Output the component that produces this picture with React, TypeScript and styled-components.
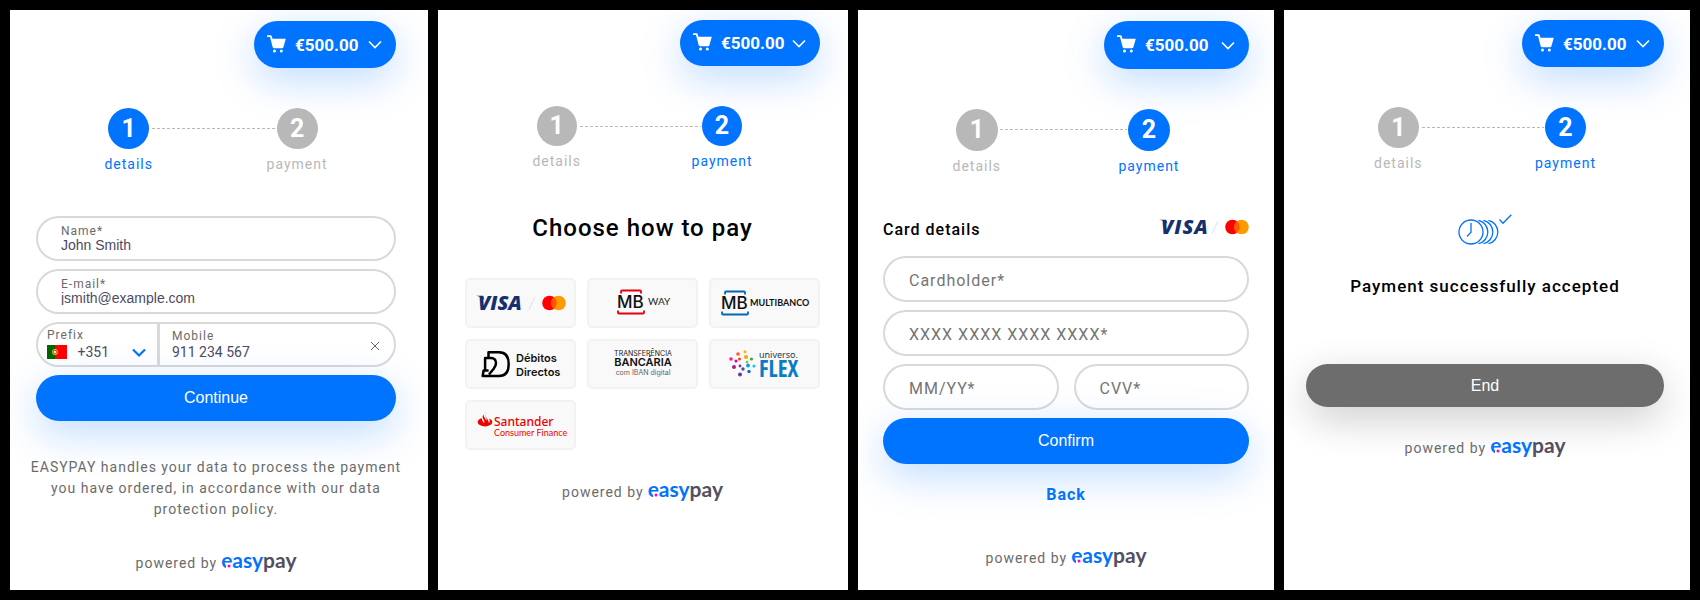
import React from 'react';
import styled, { createGlobalStyle } from 'styled-components';

const blue = '#0073ff';
const muted = '#b8b8b8';
const body = 'Roboto, "Open Sans", sans-serif';
const arial = '"Liberation Sans", Arial, sans-serif';

const GlobalStyle = createGlobalStyle`
  *, *::before, *::after { box-sizing: border-box; }
  body { margin: 0; background: #000; font-family: ${body}; font-size: 14px; letter-spacing: 1px; color: #6b6b6b; }
  button, input, select { font: inherit; letter-spacing: inherit; margin: 0; padding: 0; border: 0; background: none; color: inherit; }
  button { cursor: pointer; }
  h1, h2, p { margin: 0; }
  svg { overflow: visible; }
`;

type Size = 's' | 'm' | 'l';
const pillWidth = { s: 140, m: 142, l: 145 };
const pillHeight = { s: 46, m: 47, l: 48 };
const circleSize = { s: 40, m: 41, l: 42 };

const Board = styled.div`
  display: grid;
  grid-template-columns: 418fr 410fr 416fr 406fr;
  gap: 10px;
  padding: 10px;
  min-height: 100vh;
`;

const Panel = styled.main<{ $pad: string }>`
  display: flex;
  flex-direction: column;
  min-width: 0;
  padding: ${(p) => p.$pad};
  background: #fff;
  overflow: hidden;
`;

const CartPill = styled.button<{ $size: Size }>`
  display: flex;
  align-items: center;
  align-self: flex-end;
  flex: none;
  width: ${(p) => pillWidth[p.$size]}px;
  height: ${(p) => pillHeight[p.$size]}px;
  padding: 0 14px 0 13px;
  border-radius: 24px;
  background: ${blue};
  box-shadow: 0 12px 40px rgba(0, 115, 255, 0.25);
  color: #fff;
  font-size: 17px;
  font-weight: 700;
  letter-spacing: 0;
  svg:last-child { margin-left: auto; }
`;

const Amount = styled.span`
  margin-left: 9px;
`;

const StepList = styled.ol`
  display: flex;
  align-self: center;
  width: 62%;
  margin: 40px 0 0;
  padding: 0;
  list-style: none;
`;

const Step = styled.li<{ $active: boolean }>`
  display: flex;
  flex-direction: column;
  align-items: center;
  gap: 5px;
  line-height: 20px;
  color: ${(p) => (p.$active ? blue : muted)};
`;

const Circle = styled.span<{ $active: boolean; $size: Size }>`
  display: grid;
  place-items: center;
  width: ${(p) => circleSize[p.$size]}px;
  height: ${(p) => circleSize[p.$size]}px;
  border-radius: 50%;
  background: ${(p) => (p.$active ? blue : muted)};
  color: #fff;
  font-size: 25px;
  font-weight: 700;
  letter-spacing: 0;
`;

const Dashes = styled.li`
  flex: 1;
  height: 1px;
  margin: 20px -9px 0 -3px;
  background: repeating-linear-gradient(90deg, transparent 0 2px, #b8b8b8 2px 5px);
`;

const Form = styled.form`
  display: flex;
  flex-direction: column;
  gap: 8px;
`;

const DetailsForm = styled(Form)`
  margin-top: 42px;
`;

const CardForm = styled(Form)`
  margin-top: 14px;
`;

const Field = styled.div`
  display: flex;
  flex-direction: column;
  justify-content: center;
  height: 45px;
  padding: 0 23px;
  border: 2px solid #d9d9d9;
  border-radius: 23px;
`;

const FieldLabel = styled.label`
  font-size: 12px;
  line-height: 12px;
`;

const FieldInput = styled.input`
  width: 100%;
  height: 15px;
  outline: 0;
  color: #4d4b62;
  font-family: ${arial};
  letter-spacing: 0;
`;

const PhoneField = styled.div`
  display: flex;
  height: 45px;
  border: 2px solid #d9d9d9;
  border-radius: 23px;
`;

const PrefixPart = styled.div`
  display: flex;
  flex-direction: column;
  gap: 3px;
  width: 122px;
  padding: 5px 11px 0 9px;
  border-right: 3px solid #d9d9d9;
`;

const PrefixRow = styled.div`
  display: flex;
  align-items: center;
  justify-content: space-between;
`;

const PrefixSelect = styled.select`
  appearance: none;
  width: 44px;
  height: 16px;
  outline: 0;
  color: #4d4b62;
  letter-spacing: 0;
`;

const MobilePart = styled.div`
  display: flex;
  flex: 1;
  align-items: center;
  justify-content: space-between;
  min-width: 0;
  padding: 0 14px 0 12px;
`;

const MobileText = styled.div`
  display: flex;
  flex: 1;
  flex-direction: column;
  gap: 3px;
  min-width: 0;
`;

const PhoneInput = styled(FieldInput)`
  font-family: ${body};
`;

const ClearButton = styled.button`
  display: flex;
  padding: 3px 0 0;
`;

const ActionButton = styled.button<{ $neutral?: boolean }>`
  height: ${(p) => (p.$neutral ? 43 : 46)}px;
  border-radius: 24px;
  background: ${(p) => (p.$neutral ? '#6d6d6d' : blue)};
  box-shadow: 0 12px 40px ${(p) => (p.$neutral ? 'rgba(0, 0, 0, 0.2)' : 'rgba(0, 115, 255, 0.25)')};
  color: #fff;
  font-family: ${arial};
  font-size: 16px;
  letter-spacing: 0;
`;

const EndButton = styled(ActionButton)`
  margin-top: 66px;
`;

const Notice = styled.p`
  margin: 36px -12px 0;
  line-height: 21px;
  text-align: center;
`;

const Powered = styled.footer<{ $space: number }>`
  display: flex;
  align-items: baseline;
  justify-content: center;
  gap: 4px;
  margin-top: ${(p) => p.$space}px;
  line-height: 24px;
`;

const Brand = styled.a`
  position: relative;
  color: #52505f;
  font-family: Lato, sans-serif;
  font-size: 21px;
  font-weight: 700;
  letter-spacing: 0;
  text-decoration: none;
  b { color: ${blue}; font-weight: 700; }
  svg { position: absolute; left: 5px; top: 15px; }
`;

const Title = styled.h1`
  margin-top: 41px;
  color: #000;
  font-size: 24px;
  font-weight: 500;
  line-height: 32px;
  text-align: center;
`;

const Methods = styled.div`
  display: grid;
  grid-template-columns: repeat(3, 1fr);
  gap: 11px;
  margin-top: 34px;
`;

const Method = styled.button`
  display: grid;
  place-items: center;
  height: 50px;
  border: 2px solid #f2f2f2;
  border-radius: 5px;
  background: #f9f9f9;
  letter-spacing: 0;
`;

const CardHead = styled.div`
  display: flex;
  align-items: flex-start;
  justify-content: space-between;
  margin-top: 42px;
`;

const SubTitle = styled.h2<{ $large?: boolean }>`
  color: #000;
  font-size: ${(p) => (p.$large ? 17 : 16)}px;
  font-weight: 500;
  line-height: 24px;
`;

const CardInput = styled.input`
  width: 100%;
  min-width: 0;
  height: 46px;
  padding: 2px 24px 0;
  border: 2px solid #d9d9d9;
  border-radius: 23px;
  font-size: 16px;
  &::placeholder { color: #757575; opacity: 1; }
`;

const Pair = styled.div`
  display: grid;
  grid-template-columns: 1fr 1fr;
  gap: 15px;
`;

const BackLink = styled.a`
  align-self: center;
  margin-top: 19px;
  color: ${blue};
  font-size: 16px;
  font-weight: 700;
  line-height: 24px;
  text-decoration: none;
`;

const Success = styled.section`
  display: flex;
  flex-direction: column;
  align-items: center;
  gap: 28px;
  margin-top: 41px;
`;

const Chevron = ({ color, thick }: { color: string; thick: number }) => (
  <svg width="14" height="9" viewBox="0 0 14 9" fill="none" stroke={color} strokeWidth={thick} aria-hidden="true">
    <path d="M1 1.5 7 7.5 13 1.5" />
  </svg>
);

const CartIcon = () => (
  <svg width="19" height="20" viewBox="0 0 19 20" fill="#fff" aria-hidden="true">
    <path d="M0 .2h3.500c.6 0 1 .3 1.200.9L5.500 3.700h13.300L16.400 12.300c-.2.7-.6 1-1.300 1H7c-.7 0-1.100-.3-1.300-1L3 1.900H0z" />
    <circle cx="7.500" cy="16.100" r="1.500" />
    <circle cx="14.300" cy="16.100" r="1.500" />
  </svg>
);

const Header = ({ size, current }: { size: Size; current: 1 | 2 }) => (
  <>
    <CartPill type="button" $size={size}>
      <CartIcon />
      <Amount>€500.00</Amount>
      <Chevron color="#fff" thick={1.6} />
    </CartPill>
    <StepList>
      <Step $active={current === 1}>
        <Circle $active={current === 1} $size={size}>1</Circle>
        details
      </Step>
      <Dashes aria-hidden="true" />
      <Step $active={current === 2}>
        <Circle $active={current === 2} $size={size}>2</Circle>
        payment
      </Step>
    </StepList>
  </>
);

const PoweredBy = ({ space }: { space: number }) => (
  <Powered $space={space}>
    powered by
    <Brand href="#easypay">
      <b>easy</b>pay
      <svg width="6" height="5" viewBox="0 0 6 5" aria-hidden="true">
        <path d="M0 1h6v4H0z" fill="#fff" />
        <circle cx="3" cy="3" r="1.500" fill="#ff00c8" />
      </svg>
    </Brand>
  </Powered>
);

const Flag = () => (
  <svg width="20" height="14" viewBox="0 0 20 14" role="img" aria-label="Portugal">
    <path d="M0 0h8v14H0z" fill="#006600" />
    <path d="M8 0h12v14H8z" fill="#ff0000" />
    <circle cx="8" cy="7" r="2.900" fill="#e8c51c" />
    <path d="M6.300 5.200h3.400v2.300a1.700 1.700 0 0 1-3.400 0z" fill="#e02020" />
    <path d="M7.100 6h1.800v1.500a.9.9 0 0 1-1.800 0z" fill="#fff" />
  </svg>
);

const Cards = () => (
  <svg width="90" height="18" viewBox="0 0 90 18" role="img" aria-label="Visa, Mastercard">
    <text x="2" y="16" fontFamily="Open Sans" fontWeight="800" fontStyle="italic" fontSize="20" fill="#16306f">VISA</text>
    <path d="M0 1.700h7l1.500 4C6 3.500 3 2.200 0 1.700z" fill="#16306f" />
    <path d="m53 15.500 6-12.500" stroke="#e0e0e0" />
    <circle cx="73.500" cy="9" r="7.300" fill="#ff0000" />
    <circle cx="82.500" cy="9" r="7.300" fill="#ff9a00" />
    <path d="M78 3.250a7.300 7.300 0 0 1 0 11.500 7.300 7.300 0 0 1 0-11.500z" fill="#ff5a00" />
  </svg>
);

const MBMark = ({ color }: { color: string }) => (
  <>
    <path d="M4 4.500V2.500q0-1 1-1h18q1 0 1 1v2M1 21.500v2q0 1 1 1h24q1 0 1-1v-2" fill="none" stroke={color} strokeWidth="1.800" />
    <text x="0" y="18.500" fontFamily="Inter" fontWeight="500" fontSize="17" fill="#111">MB</text>
  </>
);

const MBWay = () => (
  <svg width="52" height="28" viewBox="0 0 52 28" role="img" aria-label="MB Way">
    <MBMark color="#e3000f" />
    <text x="31" y="16" fontFamily="Lato" fontSize="10" fill="#222">WAY</text>
  </svg>
);

const Multibanco = () => (
  <svg width="88" height="26" viewBox="0 0 88 26" role="img" aria-label="Multibanco">
    <MBMark color="#0068b3" />
    <text x="29" y="16" fontFamily="Lato" fontWeight="700" fontSize="9" fill="#111">MULTIBANCO</text>
  </svg>
);

const DebitosDirectos = () => (
  <svg width="80" height="28" viewBox="0 0 80 28" role="img" aria-label="Débitos Directos">
    <path
      d="M7.500 7.500V2.300H18c7 0 9.700 5 9.700 12S25 26 18 26H1.700L2.600 20.500h1.500V8H10c3.500 0 5 2.300 5 5.300 0 2.200-1 3.700-2.300 5.400L8 24.500M2.600 20.500h5"
      fill="none"
      stroke="#000"
      strokeWidth="2.500"
      strokeLinejoin="round"
    />
    <text x="35" y="12" fontFamily="Inter" fontWeight="600" fontSize="11" fill="#111">Débitos</text>
    <text x="35" y="26" fontFamily="Inter" fontWeight="600" fontSize="11" fill="#111">Directos</text>
  </svg>
);

const Transfer = () => (
  <svg width="64" height="28" viewBox="0 0 64 28" role="img" aria-label="Transferência bancária com IBAN digital" textAnchor="middle" fontFamily="Inter">
    <text x="32" y="6" fontSize="7" fill="#222">TRANSFERÊNCIA</text>
    <text x="32" y="16" fontSize="11" fontWeight="600" fill="#111">BANCÁRIA</text>
    <text x="32" y="25" fontSize="7" fill="#666">com IBAN digital</text>
  </svg>
);

const dots: [number, number, number, string][] = [
  [9, 4, 1.8, '#ff5a1f'], [16, 1.8, 1.5, '#ffb300'], [17, 7, 2, '#f7a600'], [10.5, 9, 1.5, '#ff3b30'],
  [2, 9, 1.8, '#ff1c8c'], [7, 11, 1.5, '#e6007e'], [22.5, 9, 1.6, '#3fae2a'], [18, 12, 1.3, '#7ac143'],
  [5, 17, 2, '#a3218e'], [11, 16, 1.4, '#8e2c9c'], [11, 24.5, 2, '#5b3aa5'], [14, 19, 1.7, '#5148a8'],
  [19, 15.5, 1.9, '#00a3e0'], [25, 16, 1.6, '#19c0e8'], [20, 21.5, 1.7, '#0072bc'],
];

const UniversoFlex = () => (
  <svg width="72" height="28" viewBox="0 0 72 28" role="img" aria-label="Universo Flex">
    {dots.map(([x, y, r, c]) => <circle key={`${x}-${y}`} cx={x} cy={y} r={r} fill={c} />)}
    <text x="30" y="8" fontFamily="Noto Sans" fontSize="9" fill="#1e3b50">universo.</text>
    <text x="30" y="27" fontFamily="Open Sans Condensed, Roboto Condensed, Noto Sans Condensed, Roboto" fontWeight="700" fontSize="23" fill="#0b7cc4">FLEX</text>
  </svg>
);

const Santander = () => (
  <svg width="88" height="26" viewBox="0 0 88 26" role="img" aria-label="Santander Consumer Finance" fill="#ec0000">
    <path d="M8.500 0c-.8 1.800-.4 3.200.5 4.800l2.300 4c.4.8.6 1.700.6 2.500 1.300-1.400 1-3.200.2-4.700 2 .8 3.200 2 3.200 3.500 0 2.400-3.300 4.300-7.300 4.300S.7 12.500.7 10.100c0-1.900 1.700-3.100 4-3.800.1 1 .4 1.700.8 2.400l1.500 2.600c.6-1.200.4-2.300-.2-3.400C5.700 6 5.200 4.800 6 3.200l.5-.8c0 1 .4 1.900.9 2.800l2 3.500c.4-1.200.2-2.400-.4-3.500C7.800 3.200 7.600 1.600 8.500 0z" />
    <text x="17" y="13.500" fontFamily="Noto Sans" fontWeight="500" fontSize="12">Santander</text>
    <text x="17" y="24" fontFamily="Lato" fontSize="9">Consumer Finance</text>
  </svg>
);

const SuccessIcon = () => (
  <svg width="54" height="32" viewBox="0 0 54 32" fill="none" stroke={blue} strokeWidth="1.300" role="img" aria-label="Accepted">
    <circle cx="13" cy="18" r="12" />
    <path d="M13 9v9.300L9 22.500M20.500 6.300a12 12 0 0 1 0 23.400M25.500 6.300a12 12 0 0 1 0 23.400M30.500 6.300a12 12 0 0 1 0 23.400M41.500 5.500 45 9.200 53.300.8" />
  </svg>
);

const methods = [
  { name: 'cards', Logo: Cards },
  { name: 'mbway', Logo: MBWay },
  { name: 'multibanco', Logo: Multibanco },
  { name: 'debit', Logo: DebitosDirectos },
  { name: 'transfer', Logo: Transfer },
  { name: 'universo', Logo: UniversoFlex },
  { name: 'santander', Logo: Santander },
];

export default function App() {
  return (
    <>
      <GlobalStyle />
      <Board>
        <Panel $pad="11px 32px 10px 26px">
          <Header size="m" current={1} />
          <DetailsForm>
            <Field>
              <FieldLabel htmlFor="name">Name*</FieldLabel>
              <FieldInput id="name" defaultValue="John Smith" />
            </Field>
            <Field>
              <FieldLabel htmlFor="email">E-mail*</FieldLabel>
              <FieldInput id="email" type="email" defaultValue="jsmith@example.com" />
            </Field>
            <PhoneField>
              <PrefixPart>
                <FieldLabel htmlFor="prefix">Prefix</FieldLabel>
                <PrefixRow>
                  <Flag />
                  <PrefixSelect id="prefix" defaultValue="+351">
                    <option>+351</option>
                  </PrefixSelect>
                  <Chevron color={blue} thick={2.2} />
                </PrefixRow>
              </PrefixPart>
              <MobilePart>
                <MobileText>
                  <FieldLabel htmlFor="mobile">Mobile</FieldLabel>
                  <PhoneInput id="mobile" type="tel" defaultValue="911 234 567" />
                </MobileText>
                <ClearButton type="button" aria-label="Clear mobile">
                  <svg width="10" height="10" viewBox="0 0 10 10" stroke="#666" aria-hidden="true">
                    <path d="M1 1l8 8M9 1 1 9" />
                  </svg>
                </ClearButton>
              </MobilePart>
            </PhoneField>
            <ActionButton type="button">Continue</ActionButton>
          </DetailsForm>
          <Notice>
            EASYPAY handles your data to process the payment you have ordered, in accordance with our data protection policy.
          </Notice>
          <PoweredBy space={28} />
        </Panel>

        <Panel $pad="10px 28px 10px 27px">
          <Header size="s" current={2} />
          <Title>Choose how to pay</Title>
          <Methods>
            {methods.map(({ name, Logo }) => (
              <Method key={name} type="button"><Logo /></Method>
            ))}
          </Methods>
          <PoweredBy space={27} />
        </Panel>

        <Panel $pad="11px 25px 10px 25px">
          <Header size="l" current={2} />
          <CardHead>
            <SubTitle>Card details</SubTitle>
            <Cards />
          </CardHead>
          <CardForm>
            <CardInput aria-label="Cardholder" placeholder="Cardholder*" />
            <CardInput aria-label="Card number" placeholder="XXXX XXXX XXXX XXXX*" />
            <Pair>
              <CardInput aria-label="Expiry date" placeholder="MM/YY*" />
              <CardInput aria-label="CVV" placeholder="CVV*" />
            </Pair>
            <ActionButton type="button">Confirm</ActionButton>
          </CardForm>
          <BackLink href="#back">Back</BackLink>
          <PoweredBy space={36} />
        </Panel>

        <Panel $pad="10px 26px 10px 22px">
          <Header size="m" current={2} />
          <Success>
            <SuccessIcon />
            <SubTitle $large>Payment successfully accepted</SubTitle>
          </Success>
          <EndButton type="button" $neutral>End</EndButton>
          <PoweredBy space={26} />
        </Panel>
      </Board>
    </>
  );
}
